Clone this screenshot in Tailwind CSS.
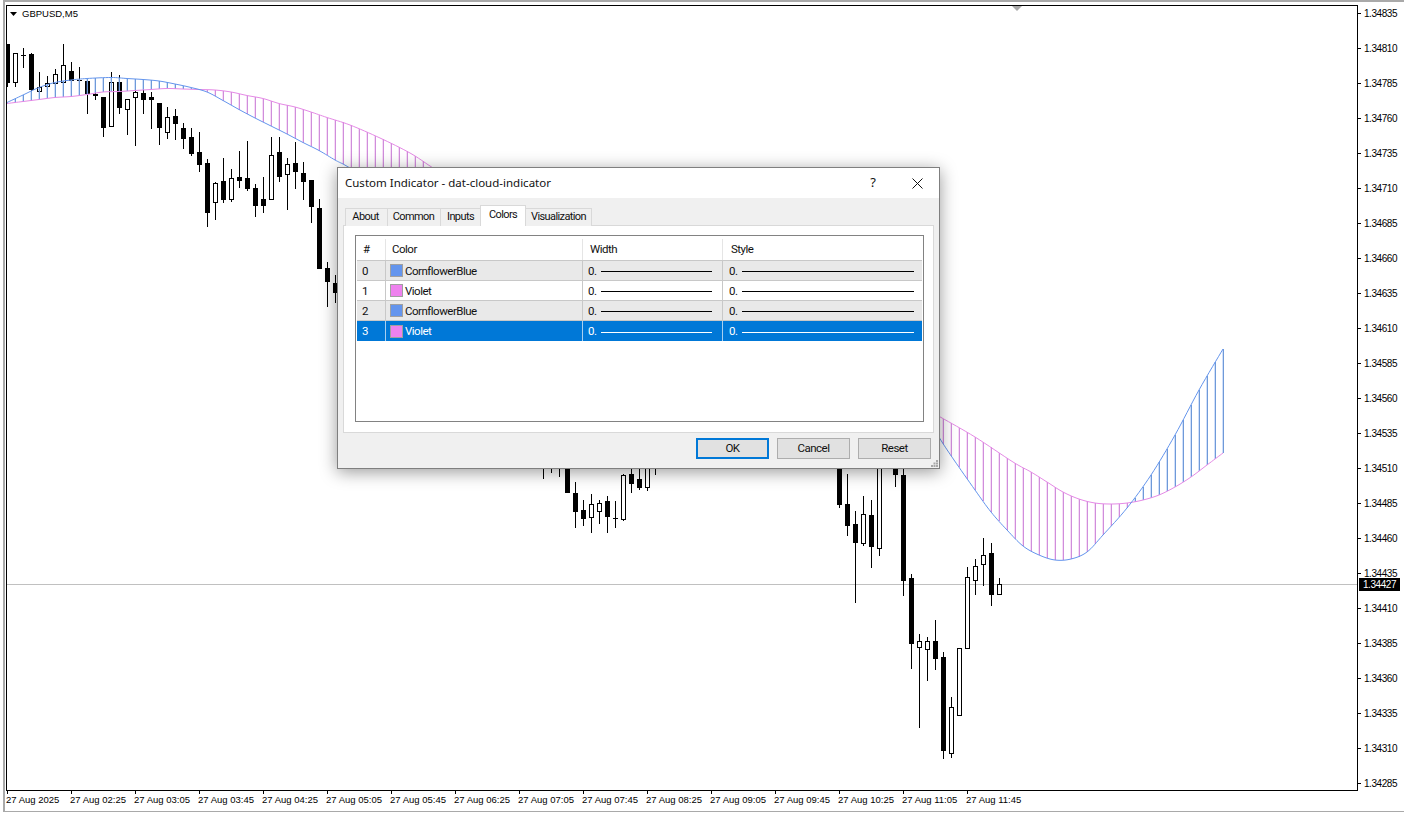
<!DOCTYPE html>
<html lang="en">

<head>
	<meta charset="UTF-8">
	<title>GBPUSD,M5 - Custom Indicator</title>
	<script src="https://cdn.jsdelivr.net/npm/@tailwindcss/browser@4"></script>
</head>

<body class="bg-white">
	<div class="relative w-[1404px] h-[813px] overflow-hidden bg-white pl-[3px] flex text-black font-['Liberation_Sans',sans-serif]">
		<div class="flex-1 h-[812px] flex flex-col border-l-2 border-t-2 border-b border-[#a9a9a9] pl-px pt-[3px]">
			<div class="flex h-[786px]">
				<!-- chart -->
				<div class="relative w-[1352px] h-[786px] border border-black overflow-hidden">
					<svg id="chart" class="block" width="1350" height="784" viewBox="7 6 1350 784"></svg>
					<div class="absolute left-[3px] top-[3px] flex items-center gap-[5px] text-[9.5px] leading-[9px]">
						<svg width="7" height="4" viewBox="0 0 7 4"><path d="M0 0h7L3.500 4z" fill="#000" /></svg>
						<span>GBPUSD,M5</span>
					</div>
				</div>
				<!-- price axis -->
				<div class="flex-1 -mt-[9.500px] text-[10px] tracking-[-0.45px]">
					<div class="h-[35px] flex items-center gap-[3px]"><i class="w-[3px] h-px bg-black"></i>1.34835</div>
					<div class="h-[35px] flex items-center gap-[3px]"><i class="w-[3px] h-px bg-black"></i>1.34810</div>
					<div class="h-[35px] flex items-center gap-[3px]"><i class="w-[3px] h-px bg-black"></i>1.34785</div>
					<div class="h-[35px] flex items-center gap-[3px]"><i class="w-[3px] h-px bg-black"></i>1.34760</div>
					<div class="h-[35px] flex items-center gap-[3px]"><i class="w-[3px] h-px bg-black"></i>1.34735</div>
					<div class="h-[35px] flex items-center gap-[3px]"><i class="w-[3px] h-px bg-black"></i>1.34710</div>
					<div class="h-[35px] flex items-center gap-[3px]"><i class="w-[3px] h-px bg-black"></i>1.34685</div>
					<div class="h-[35px] flex items-center gap-[3px]"><i class="w-[3px] h-px bg-black"></i>1.34660</div>
					<div class="h-[35px] flex items-center gap-[3px]"><i class="w-[3px] h-px bg-black"></i>1.34635</div>
					<div class="h-[35px] flex items-center gap-[3px]"><i class="w-[3px] h-px bg-black"></i>1.34610</div>
					<div class="h-[35px] flex items-center gap-[3px]"><i class="w-[3px] h-px bg-black"></i>1.34585</div>
					<div class="h-[35px] flex items-center gap-[3px]"><i class="w-[3px] h-px bg-black"></i>1.34560</div>
					<div class="h-[35px] flex items-center gap-[3px]"><i class="w-[3px] h-px bg-black"></i>1.34535</div>
					<div class="h-[35px] flex items-center gap-[3px]"><i class="w-[3px] h-px bg-black"></i>1.34510</div>
					<div class="h-[35px] flex items-center gap-[3px]"><i class="w-[3px] h-px bg-black"></i>1.34485</div>
					<div class="h-[35px] flex items-center gap-[3px]"><i class="w-[3px] h-px bg-black"></i>1.34460</div>
					<div class="h-[35px] flex items-center gap-[3px]"><i class="w-[3px] h-px bg-black"></i>1.34435</div>
					<div class="h-[35px] flex items-center gap-[3px]"><i class="w-[3px] h-px bg-black"></i>1.34410</div>
					<div class="h-[35px] flex items-center gap-[3px]"><i class="w-[3px] h-px bg-black"></i>1.34385</div>
					<div class="h-[35px] flex items-center gap-[3px]"><i class="w-[3px] h-px bg-black"></i>1.34360</div>
					<div class="h-[35px] flex items-center gap-[3px]"><i class="w-[3px] h-px bg-black"></i>1.34335</div>
					<div class="h-[35px] flex items-center gap-[3px]"><i class="w-[3px] h-px bg-black"></i>1.34310</div>
					<div class="h-[35px] flex items-center gap-[3px]"><i class="w-[3px] h-px bg-black"></i>1.34285</div>
				</div>
			</div>
			<!-- time axis -->
			<div class="flex h-5 pl-px text-[9.5px] leading-[11px]">
				<div class="w-16"><div class="w-px h-[3px] bg-black"></div><div class="-ml-px whitespace-nowrap">27 Aug 2025</div></div>
				<div class="w-16"><div class="w-px h-[3px] bg-black"></div><div class="-ml-px whitespace-nowrap">27 Aug 02:25</div></div>
				<div class="w-16"><div class="w-px h-[3px] bg-black"></div><div class="-ml-px whitespace-nowrap">27 Aug 03:05</div></div>
				<div class="w-16"><div class="w-px h-[3px] bg-black"></div><div class="-ml-px whitespace-nowrap">27 Aug 03:45</div></div>
				<div class="w-16"><div class="w-px h-[3px] bg-black"></div><div class="-ml-px whitespace-nowrap">27 Aug 04:25</div></div>
				<div class="w-16"><div class="w-px h-[3px] bg-black"></div><div class="-ml-px whitespace-nowrap">27 Aug 05:05</div></div>
				<div class="w-16"><div class="w-px h-[3px] bg-black"></div><div class="-ml-px whitespace-nowrap">27 Aug 05:45</div></div>
				<div class="w-16"><div class="w-px h-[3px] bg-black"></div><div class="-ml-px whitespace-nowrap">27 Aug 06:25</div></div>
				<div class="w-16"><div class="w-px h-[3px] bg-black"></div><div class="-ml-px whitespace-nowrap">27 Aug 07:05</div></div>
				<div class="w-16"><div class="w-px h-[3px] bg-black"></div><div class="-ml-px whitespace-nowrap">27 Aug 07:45</div></div>
				<div class="w-16"><div class="w-px h-[3px] bg-black"></div><div class="-ml-px whitespace-nowrap">27 Aug 08:25</div></div>
				<div class="w-16"><div class="w-px h-[3px] bg-black"></div><div class="-ml-px whitespace-nowrap">27 Aug 09:05</div></div>
				<div class="w-16"><div class="w-px h-[3px] bg-black"></div><div class="-ml-px whitespace-nowrap">27 Aug 09:45</div></div>
				<div class="w-16"><div class="w-px h-[3px] bg-black"></div><div class="-ml-px whitespace-nowrap">27 Aug 10:25</div></div>
				<div class="w-16"><div class="w-px h-[3px] bg-black"></div><div class="-ml-px whitespace-nowrap">27 Aug 11:05</div></div>
				<div class="w-16"><div class="w-px h-[3px] bg-black"></div><div class="-ml-px whitespace-nowrap">27 Aug 11:45</div></div>
			</div>
		</div>

		<!-- current price badge -->
		<div class="absolute left-[1359px] top-[578px] w-[41px] h-[13px] bg-black text-white text-[10px] tracking-[-0.45px] leading-[13px] pl-[4px]">1.34427</div>

		<!-- dialog -->
		<div class="absolute left-[337px] top-[167px] w-[603px] h-[302px] flex flex-col bg-[#f0f0f0] border border-[#7f7f7f] shadow-[0_3px_16px_rgba(0,0,0,0.4)] text-[11.5px] text-[#111] font-['Roboto',sans-serif] tracking-[-0.5px]">
			<div class="h-[30px] shrink-0 bg-white flex items-center pl-[7px] text-[11.5px] tracking-normal font-['Noto_Sans',sans-serif]">
				<span>Custom Indicator - dat-cloud-indicator</span>
				<span class="ml-auto mr-[36px] text-[13px]">?</span>
				<svg class="mr-[16px]" width="11" height="11" viewBox="0 0 11 11"><path d="M0.500 0.500l10 10M10.500 0.500l-10 10" stroke="#111" fill="none" /></svg>
			</div>
			<div class="flex-1 relative px-[5px]">
				<div class="flex items-end h-[28px] pl-[2px] relative z-10 text-[11px] tracking-[-0.6px]">
					<div class="w-[43px] h-[18px] pr-[2px] flex items-center justify-center bg-[#f0f0f0] border border-b-0 border-[#d9d9d9]">About</div>
					<div class="w-[54px] h-[18px] pr-px -ml-px flex items-center justify-center bg-[#f0f0f0] border border-b-0 border-[#d9d9d9]">Common</div>
					<div class="w-[41px] h-[18px] -ml-px flex items-center justify-center bg-[#f0f0f0] border border-b-0 border-[#d9d9d9]">Inputs</div>
					<div class="w-[46px] h-[21px] -ml-px flex items-center justify-center bg-white border border-b-0 border-[#d9d9d9] pb-[2px]">Colors</div>
					<div class="w-[67px] h-[18px] -ml-px flex items-center justify-center bg-[#f0f0f0] border border-b-0 border-[#d9d9d9]">Visualization</div>
				</div>
				<div class="h-[208px] -mt-px bg-white border border-[#d9d9d9] pt-[9px] pl-[11px]">
					<div class="w-[569px] h-[187px] border border-[#828282] p-px">
						<div class="flex h-[24px] pt-[2px] border-b border-[#c8c8c8]">
							<div class="w-[29px] pl-[6px] flex items-center border-r border-[#e5e5e5]">#</div>
							<div class="w-[197px] pl-[6px] flex items-center border-r border-[#e5e5e5]">Color</div>
							<div class="w-[140px] pl-[7px] flex items-center border-r border-[#e5e5e5]">Width</div>
							<div class="flex-1 pl-[8px] flex items-center">Style</div>
						</div>
						<div class="flex h-5 bg-[#e9e9e9] border-b border-[#c8c8c8]">
							<div class="w-[29px] pl-[5px] pt-[2px] flex items-center border-r border-[#c8c8c8]">0</div>
							<div class="w-[197px] pl-[4px] flex items-center gap-[2px] border-r border-[#c8c8c8]"><i class="w-[13px] h-[13px] bg-[#6495ed] border border-[#a0a0a0]"></i><span class="pt-[2px]">CornflowerBlue</span></div>
							<div class="w-[140px] pl-[5px] pr-[10px] pt-[2px] flex items-center gap-[4px] border-r border-[#c8c8c8]">0.<i class="flex-1 h-px bg-black"></i></div>
							<div class="flex-1 pl-[6px] pr-[8px] pt-[2px] flex items-center gap-[4px]">0.<i class="flex-1 h-px bg-black"></i></div>
						</div>
						<div class="flex h-5 bg-white border-b border-[#c8c8c8]">
							<div class="w-[29px] pl-[5px] pt-[2px] flex items-center border-r border-[#c8c8c8]">1</div>
							<div class="w-[197px] pl-[4px] flex items-center gap-[2px] border-r border-[#c8c8c8]"><i class="w-[13px] h-[13px] bg-[#ee82ee] border border-[#a0a0a0]"></i><span class="pt-[2px]">Violet</span></div>
							<div class="w-[140px] pl-[5px] pr-[10px] pt-[2px] flex items-center gap-[4px] border-r border-[#c8c8c8]">0.<i class="flex-1 h-px bg-black"></i></div>
							<div class="flex-1 pl-[6px] pr-[8px] pt-[2px] flex items-center gap-[4px]">0.<i class="flex-1 h-px bg-black"></i></div>
						</div>
						<div class="flex h-5 bg-[#e9e9e9] border-b border-[#c8c8c8]">
							<div class="w-[29px] pl-[5px] pt-[2px] flex items-center border-r border-[#c8c8c8]">2</div>
							<div class="w-[197px] pl-[4px] flex items-center gap-[2px] border-r border-[#c8c8c8]"><i class="w-[13px] h-[13px] bg-[#6495ed] border border-[#a0a0a0]"></i><span class="pt-[2px]">CornflowerBlue</span></div>
							<div class="w-[140px] pl-[5px] pr-[10px] pt-[2px] flex items-center gap-[4px] border-r border-[#c8c8c8]">0.<i class="flex-1 h-px bg-black"></i></div>
							<div class="flex-1 pl-[6px] pr-[8px] pt-[2px] flex items-center gap-[4px]">0.<i class="flex-1 h-px bg-black"></i></div>
						</div>
						<div class="flex h-5 bg-[#0078d7] text-white">
							<div class="w-[29px] pl-[5px] pt-[2px] flex items-center border-r border-[#a8cff0]">3</div>
							<div class="w-[197px] pl-[4px] flex items-center gap-[2px] border-r border-[#a8cff0]"><i class="w-[13px] h-[13px] bg-[#ee82ee] border border-[#a0a0a0]"></i><span class="pt-[2px]">Violet</span></div>
							<div class="w-[140px] pl-[5px] pr-[10px] pt-[2px] flex items-center gap-[4px] border-r border-[#a8cff0]">0.<i class="flex-1 h-px bg-white"></i></div>
							<div class="flex-1 pl-[6px] pr-[8px] pt-[2px] flex items-center gap-[4px]">0.<i class="flex-1 h-px bg-white"></i></div>
						</div>
					</div>
				</div>
				<div class="flex justify-end gap-2 mt-[5px] pr-[3px]">
					<div class="w-[73px] h-[21px] pt-px flex items-center justify-center bg-[#e1e1e1] border-2 border-[#0078d7]">OK</div>
					<div class="w-[73px] h-[21px] pt-px flex items-center justify-center bg-[#e1e1e1] border border-[#adadad]">Cancel</div>
					<div class="w-[73px] h-[21px] pt-px flex items-center justify-center bg-[#e1e1e1] border border-[#adadad]">Reset</div>
				</div>
				<svg class="absolute right-[1px] bottom-[1px]" width="7" height="7" viewBox="0 0 7 7" fill="#a8a8a8"><rect x="5" y="0" width="2" height="2" /><rect x="2.500" y="2.500" width="2" height="2" /><rect x="5" y="2.500" width="2" height="2" /><rect x="0" y="5" width="2" height="2" /><rect x="2.500" y="5" width="2" height="2" /><rect x="5" y="5" width="2" height="2" /></svg>
			</div>
		</div>
	</div>

	<script>
		// x, high, low, body top, body bottom, white candle
		const candles = [
			[7,44,87,44,83,0],[15,53,87,53,82,1],[23,48,68,55,56,0],[31,53,92,54,90,0],[39,72,91,87,91,1],[47,76,88,83,86,1],
			[55,69,84,74,83,1],[63,44,84,65,82,1],[71,62,82,71,81,0],[79,67,81,80,81,0],[87,81,114,81,94,0],[95,93,100,94,96,0],
			[103,97,137,97,128,0],[111,72,126,82,126,1],[119,75,114,82,108,0],[127,99,135,99,109,1],[135,90,146,92,97,1],[143,90,114,93,100,0],
			[151,92,129,97,100,0],[159,103,145,103,128,0],[167,107,139,117,132,1],[175,109,140,116,124,0],[183,123,149,128,139,0],[191,128,156,137,154,0],
			[199,132,172,152,165,0],[207,159,227,163,213,0],[215,182,220,183,202,1],[223,158,203,181,200,0],[231,169,202,178,199,1],[239,151,188,177,181,0],
			[247,141,191,178,189,0],[255,184,217,188,206,0],[263,177,213,199,206,0],[271,137,199,155,199,1],[279,137,182,152,177,0],[287,158,210,164,174,1],
			[295,142,189,163,172,0],[303,162,200,173,182,0],[311,180,223,180,207,0],[319,199,269,208,269,0],[327,262,307,268,282,0],[335,275,303,283,293,0],
			[543,440,479,440,460,0],[551,440,473,440,460,0],[559,440,477,440,460,0],[567,440,493,440,493,0],[575,482,528,493,512,0],[583,500,526,510,519,0],
			[591,494,533,504,517,1],[599,500,524,503,511,1],[607,496,533,501,517,0],[615,501,528,518,519,0],[623,474,521,475,519,1],[631,460,493,474,484,0],
			[639,460,490,479,488,0],[647,440,491,440,487,1],[655,440,475,440,460,0],
			[839,440,508,440,505,0],[847,474,536,504,526,0],[855,511,603,524,543,0],[863,496,546,514,543,1],[871,500,568,515,547,0],[879,440,556,440,548,1],
			[895,440,487,440,475,0],[903,440,596,475,581,0],[911,574,669,578,644,0],[919,634,728,641,647,1],[927,637,681,641,649,1],[935,620,670,641,659,0],
			[943,652,759,657,751,0],[951,697,758,707,753,1],[959,648,716,648,715,1],[967,567,649,577,648,1],[975,559,595,566,580,1],[983,538,586,555,564,1],
			[991,543,606,553,595,0],[999,578,594,584,594,1]
		]
		const blue = [[7,102.5],[23,95],[39,87.5],[55,82.5],[71,80],[87,78.500],[111,77.500],[127,78.500],[143,79.500],[159,81],[175,84],[191,87.500],[207,92],[223,100.500],[239,109.500],[255,118],[271,126],[287,134],[303,142.500],[319,150.500],[335,160],[343,164],[350,168]]
		const violet = [[7,103.500],[23,101.500],[39,99.500],[55,97.500],[71,96.500],[87,94.500],[103,92],[119,91.500],[135,90.500],[151,89.500],[167,88.500],[183,89],[199,89.500],[215,90],[231,92],[247,95.500],[263,98.500],[279,103.500],[295,107],[311,112],[327,117.500],[350,125],[380,138],[410,153],[430,166],[440,172]]
		const blue2 = [[935,430],[942,442],[954,460],[975,490],[991,512],[1007,530],[1023,546],[1039,555],[1055,560],[1071,559],[1087,552],[1103,535],[1127,508],[1151,475],[1175,435],[1199,390],[1223,349]]
		const violet2 = [[935,414],[942,418],[975,437],[1013,462],[1031,472],[1047,482],[1063,492],[1079,499],[1095,503],[1111,504],[1127,503],[1143,500],[1159,495],[1175,487],[1191,477],[1207,465],[1223,453]]
		const BLUE = '#6495ed', VIOLET = '#e58ae6'

		// Catmull-Rom so the hand-read points give a smooth line
		const smooth = pts => {
			const res = []
			for (let i = 0; i < pts.length - 1; i++) {
				const p0 = pts[i - 1] || pts[i], p1 = pts[i], p2 = pts[i + 1], p3 = pts[i + 2] || p2
				for (let s = 0; s < 8; s++) {
					const t = s / 8, t2 = t * t, t3 = t2 * t
					res.push([0, 1].map(k => 0.5 * (2 * p1[k] + (p2[k] - p0[k]) * t + (2 * p0[k] - 5 * p1[k] + 4 * p2[k] - p3[k]) * t2 + (3 * p1[k] - p0[k] - 3 * p2[k] + p3[k]) * t3)))
				}
			}
			res.push(pts[pts.length - 1])
			return res
		}
		const at = (pts, x) => {
			for (let i = 1; i < pts.length; i++) {
				if (x <= pts[i][0]) {
					const [x0, y0] = pts[i - 1], [x1, y1] = pts[i]
					return y0 + (y1 - y0) * (x - x0) / (x1 - x0)
				}
			}
			return pts[pts.length - 1][1]
		}
		const px = v => `<rect x="${v.x}" y="${v.y}" width="${v.w}" height="${v.h}" fill="${v.c}" shape-rendering="crispEdges"/>`
		const poly = (pts, c) => `<polyline points="${pts.map(p => p.join(',')).join(' ')}" fill="none" stroke="${c}" stroke-width="1"/>`

		let out = px({ x: 7, y: 584, w: 1350, h: 1, c: '#c0c0c0' })
		out += '<path d="M1012 6h10l-5 5z" fill="#a8a8a8"/>'

		candles.forEach(([x, hi, lo, top, bot, white]) => {
			out += px({ x, y: hi, w: 1, h: lo - hi, c: '#000' })
			if (white) out += `<rect x="${x - 1.5}" y="${top + 0.5}" width="4" height="${bot - top}" fill="#fff" stroke="#000" shape-rendering="crispEdges"/>`
			else out += px({ x: x - 2, y: top, w: 5, h: bot - top, c: '#000' })
		})

		const b1 = smooth(blue), v1 = smooth(violet), b2 = smooth(blue2), v2 = smooth(violet2)
		// the picture's hatch lines are a strong core with a pale fringe
		const hatch = (from, to, a, b) => {
			for (let x = from; x <= to; x += 8) {
				const ya = at(a, x), yb = at(b, x)
				const top = Math.min(ya, yb), h = Math.abs(ya - yb)
				const isBlue = ya < yb
				out += `<rect x="${x - 1}" y="${top}" width="1" height="${h}" fill="${isBlue ? BLUE : VIOLET}" fill-opacity="0.3" shape-rendering="crispEdges"/>`
				out += px({ x, y: top, w: 1, h, c: isBlue ? '#6f9ad8' : '#cf8edb' })
			}
		}
		hatch(7, 343, b1, v1)
		hatch(351, 439, [[351, 168], [439, 168]], v1)
		hatch(943, 1223, b2, v2)
		out += poly(v1, VIOLET) + poly(b1, BLUE) + poly(v2, VIOLET) + poly(b2, BLUE)

		document.getElementById('chart').innerHTML = out
	</script>
</body>
</html>
